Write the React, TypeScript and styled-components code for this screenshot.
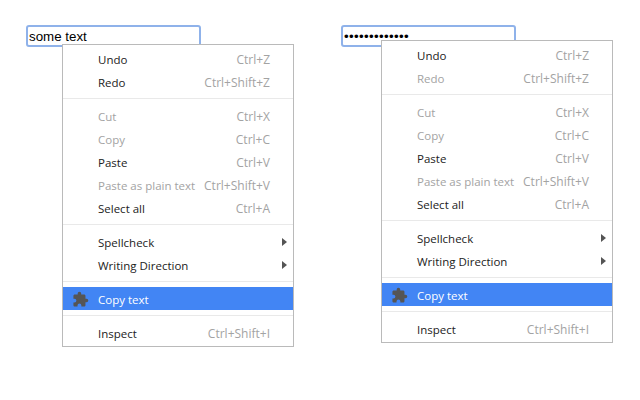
import styled, { createGlobalStyle } from "styled-components";

const GlobalStyle = createGlobalStyle`
  html, body {
    margin: 0;
    padding: 0;
    background: #fff;
  }
`;

type Item =
  | { sep: true }
  | { label: string; keys?: string; off?: boolean; arrow?: boolean; active?: boolean; icon?: boolean };

const items = (redoOff: boolean): Item[] => [
  { label: "Undo", keys: "Ctrl+Z" },
  { label: "Redo", keys: "Ctrl+Shift+Z", off: redoOff },
  { sep: true },
  { label: "Cut", keys: "Ctrl+X", off: true },
  { label: "Copy", keys: "Ctrl+C", off: true },
  { label: "Paste", keys: "Ctrl+V" },
  { label: "Paste as plain text", keys: "Ctrl+Shift+V", off: true },
  { label: "Select all", keys: "Ctrl+A" },
  { sep: true },
  { label: "Spellcheck", arrow: true },
  { label: "Writing Direction", arrow: true },
  { sep: true },
  { label: "Copy text", active: true, icon: true },
  { sep: true },
  { label: "Inspect", keys: "Ctrl+Shift+I" },
];

function Puzzle() {
  return (
    <PuzzleIcon viewBox="0 0 24 24">
      <path d="M20.5 11H19V7c0-1.1-.9-2-2-2h-4V3.5a2.5 2.5 0 0 0-5 0V5H4c-1.1 0-2 .9-2 2v3.8h1.5a2.7 2.7 0 0 1 0 5.4H2V20c0 1.1.9 2 2 2h3.8v-1.5a2.7 2.7 0 0 1 5.4 0V22H17c1.1 0 2-.9 2-2v-4h1.5a2.5 2.5 0 0 0 0-5z" />
    </PuzzleIcon>
  );
}

function Menu({ redoOff }: { redoOff: boolean }) {
  return (
    <MenuBox>
      {items(redoOff).map((item, i) =>
        "sep" in item ? (
          <Separator key={i} />
        ) : (
          <Row key={i} $off={item.off} $active={item.active}>
            {item.icon && <Puzzle />}
            <span>{item.label}</span>
            {item.keys && <Keys>{item.keys}</Keys>}
            {item.arrow && <Arrow />}
          </Row>
        )
      )}
    </MenuBox>
  );
}

export default function App() {
  return (
    <Page>
      <GlobalStyle />
      <Demo>
        <Field>some text</Field>
        <Menu redoOff={false} />
      </Demo>
      <Demo $second>
        <Field $password>•••••••••••••</Field>
        <Menu redoOff />
      </Demo>
    </Page>
  );
}

const Page = styled.div`
  display: flex;
  width: 640px;
  height: 400px;
  padding: 25px 0 0 26px;
  box-sizing: border-box;
  gap: 140px;
  overflow: hidden;
`;

const Demo = styled.div<{ $second?: boolean }>`
  position: relative;
  width: 175px;
  height: 22px;
  --menu-left: ${(p) => (p.$second ? "40px" : "36px")};
  --menu-top: ${(p) => (p.$second ? "15px" : "19px")};
`;

const Field = styled.div<{ $password?: boolean }>`
  box-sizing: border-box;
  width: 175px;
  height: 22px;
  border: 2px solid #8fb2ea;
  border-radius: 3px;
  padding-left: 1px;
  font-family: "Liberation Sans", sans-serif;
  font-size: 13.33px;
  letter-spacing: ${(p) => (p.$password ? "0.33px" : "0")};
  line-height: 19px;
  color: #000;
  white-space: nowrap;
`;

const MenuBox = styled.div`
  position: absolute;
  left: var(--menu-left);
  top: var(--menu-top);
  box-sizing: border-box;
  width: 232px;
  height: 303px;
  padding-top: 2px;
  background: #fff;
  border: 1px solid #bababa;
  font-family: "Open Sans", sans-serif;
  font-size: 11.5px;
`;

const Row = styled.div<{ $off?: boolean; $active?: boolean }>`
  position: relative;
  box-sizing: border-box;
  display: flex;
  align-items: center;
  justify-content: space-between;
  height: 23px;
  padding: 2px 23px 0 35px;
  color: ${(p) => (p.$active ? "#fff" : p.$off ? "#a3a3a3" : "#222")};
  background: ${(p) => (p.$active ? "#4285f4" : "transparent")};
  white-space: nowrap;
`;

const Keys = styled.span`
  color: #a3a3a3;
  font-size: 12px;
`;

const Arrow = styled.span`
  position: absolute;
  right: 6px;
  top: 8px;
  border-left: 5px solid #555;
  border-top: 4px solid transparent;
  border-bottom: 4px solid transparent;
`;

const Separator = styled.div`
  height: 1px;
  margin: 5px 0;
  background: #e9e9e9;
`;

const PuzzleIcon = styled.svg`
  position: absolute;
  left: 9px;
  top: 4px;
  width: 17px;
  height: 17px;
  fill: #555;
`;
